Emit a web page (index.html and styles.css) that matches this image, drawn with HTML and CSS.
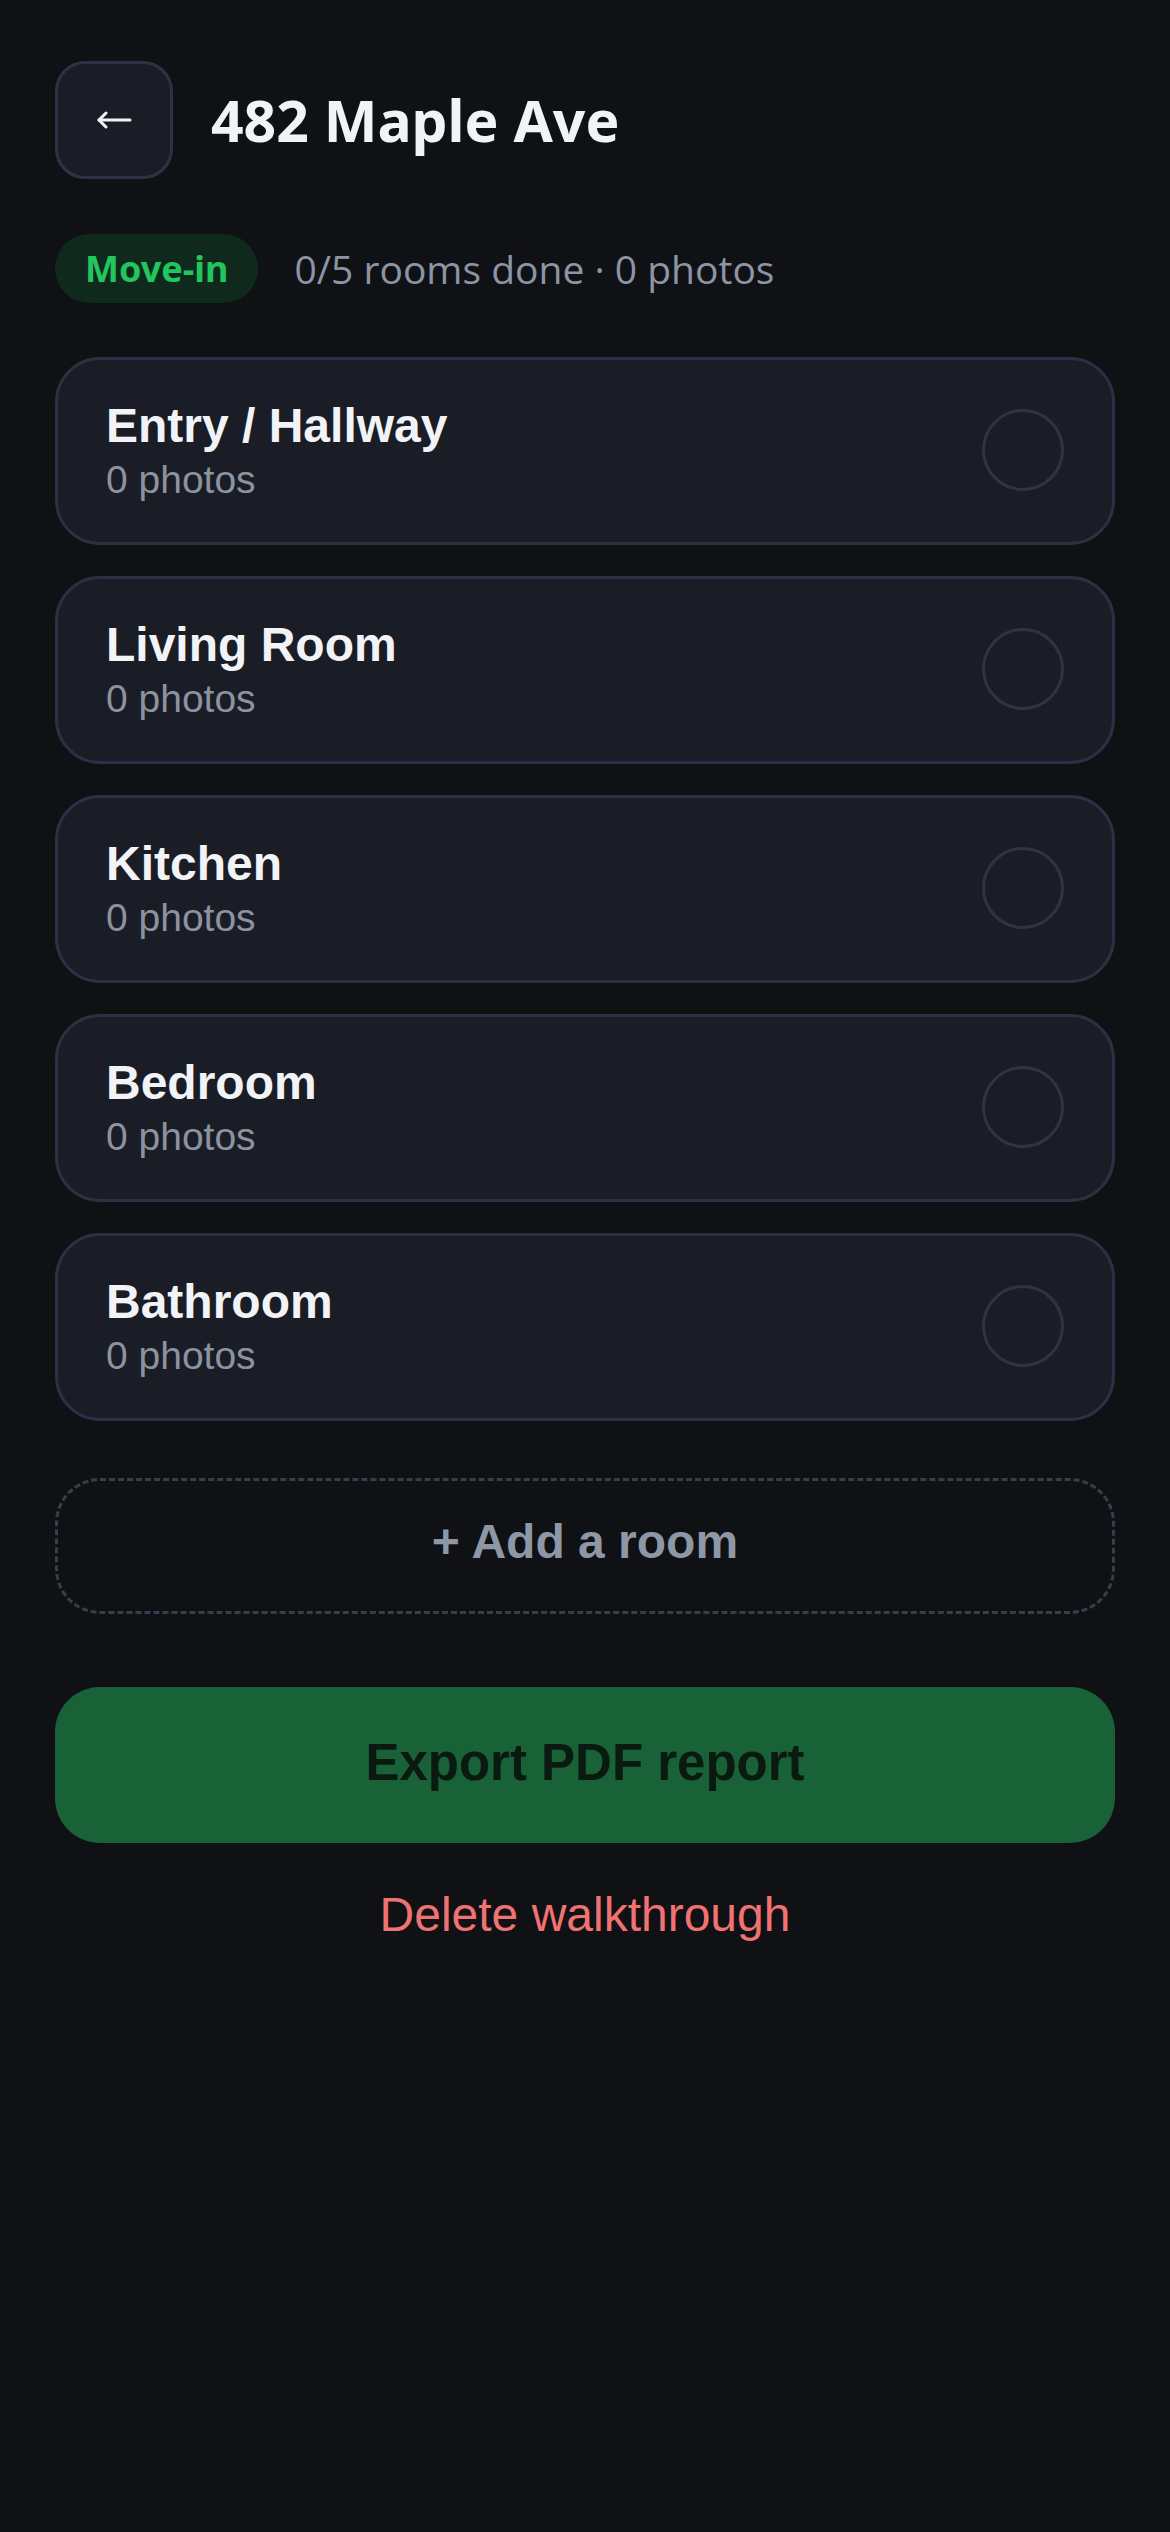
FILE: index.html
```html
<!DOCTYPE html>
<html lang="en">
<head>
    <meta charset="UTF-8">
    <meta name="viewport" content="width=device-width, initial-scale=1.0">
    <title>482 Maple Ave - Walkthrough</title>
    <link rel="stylesheet" href="styles.css">
</head>
<body>
    <div class="header">
        <button class="back-btn" type="button">
            <svg width="36" height="18" viewBox="0 0 36 18" fill="none" stroke="#f1f3f7" stroke-width="3" stroke-linecap="round" stroke-linejoin="round">
                <path d="M34 9H3"/>
                <path d="M10 2L3 9l7 7"/>
            </svg>
        </button>
        <h1>482 Maple Ave</h1>
    </div>

    <div class="meta">
        <span class="badge">Move-in</span>
        <span class="meta-text">0/5 rooms done · 0 photos</span>
    </div>

    <div class="rooms">
        <div class="room">
            <div class="room-info">
                <div class="room-name">Entry / Hallway</div>
                <div class="room-count">0 photos</div>
            </div>
            <div class="check"></div>
        </div>
        <div class="room">
            <div class="room-info">
                <div class="room-name">Living Room</div>
                <div class="room-count">0 photos</div>
            </div>
            <div class="check"></div>
        </div>
        <div class="room">
            <div class="room-info">
                <div class="room-name">Kitchen</div>
                <div class="room-count">0 photos</div>
            </div>
            <div class="check"></div>
        </div>
        <div class="room">
            <div class="room-info">
                <div class="room-name">Bedroom</div>
                <div class="room-count">0 photos</div>
            </div>
            <div class="check"></div>
        </div>
        <div class="room">
            <div class="room-info">
                <div class="room-name">Bathroom</div>
                <div class="room-count">0 photos</div>
            </div>
            <div class="check"></div>
        </div>
    </div>

    <button class="add-room" type="button">+ Add a room</button>

    <button class="export" type="button">Export PDF report</button>

    <div class="delete">Delete walkthrough</div>
</body>
</html>
```

FILE: styles.css
```css
body {
    margin: 0;
    padding: 61px 55px;
    background-color: #0f1115;
    color: #f1f3f7;
    font-family: "Liberation Sans", Arial, sans-serif;
}
.header {
    display: flex;
    align-items: center;
    gap: 38px;
}
.back-btn {
    width: 118px;
    height: 118px;
    border: 3px solid #2d3344;
    border-radius: 30px;
    background-color: #1a1d26;
    padding: 0;
    display: flex;
    align-items: center;
    justify-content: center;
}
h1 {
    margin: 0;
    font-family: "Noto Sans", "Open Sans", sans-serif;
    font-size: 57px;
    font-weight: 700;
    color: #f1f3f7;
}
.meta {
    display: flex;
    align-items: center;
    gap: 36px;
    margin-top: 55px;
    font-family: "Open Sans", "Noto Sans", sans-serif;
}
.badge {
    height: 69px;
    padding: 0 30px;
    display: flex;
    align-items: center;
    border-radius: 35px;
    background-color: #0f2a1c;
    color: #22c55e;
    font-family: "Noto Sans", "Open Sans", sans-serif;
    font-size: 36px;
    font-weight: 700;
}
.meta-text {
    font-size: 39px;
    color: #8b95a4;
}
.rooms {
    margin-top: 54px;
    display: flex;
    flex-direction: column;
    gap: 31px;
}
.room {
    height: 188px;
    box-sizing: border-box;
    padding: 0 48px 3px;
    display: flex;
    align-items: center;
    justify-content: space-between;
    background-color: #1a1d25;
    border: 3px solid #2b3142;
    border-radius: 45px;
}
.room-name {
    font-size: 48px;
    font-weight: 700;
    color: #f1f3f7;
}
.room-count {
    margin-top: 5px;
    font-size: 39px;
    color: #8b93a1;
}
.check {
    width: 82px;
    height: 82px;
    box-sizing: border-box;
    border: 3px solid #2e3444;
    border-radius: 50%;
}
.add-room {
    display: block;
    width: 100%;
    height: 136px;
    margin-top: 57px;
    padding: 0 0 10px;
    background: none;
    border: 3px dashed #373d4c;
    border-radius: 45px;
    color: #8e97a5;
    font-family: "Liberation Sans", Arial, sans-serif;
    font-size: 48px;
    font-weight: 700;
}
.export {
    display: block;
    width: 100%;
    height: 156px;
    margin-top: 73px;
    padding: 0 0 6px;
    border: none;
    border-radius: 45px;
    background-color: #196238;
    color: #0a1a10;
    font-family: "Liberation Sans", Arial, sans-serif;
    font-size: 51px;
    font-weight: 700;
}
.delete {
    margin-top: 44px;
    text-align: center;
    font-size: 48px;
    color: #f07272;
}
```
